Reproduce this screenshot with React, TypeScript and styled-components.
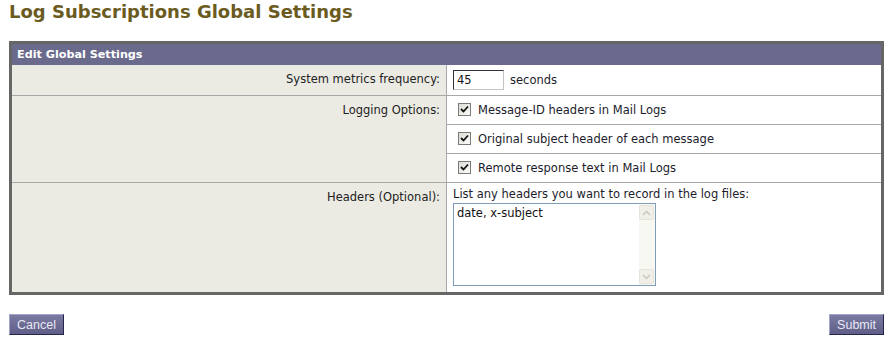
import React from "react";
import styled, { createGlobalStyle } from "styled-components";

const GlobalStyle = createGlobalStyle`
  body {
    margin: 0;
    background: #ffffff;
    font-family: Verdana, "DejaVu Sans", sans-serif;
  }
`;

const Page = styled.div`
  padding: 0 9px;
`;

const Title = styled.h1`
  margin: 0;
  height: 41px;
  padding-top: 1px;
  box-sizing: border-box;
  font-size: 18px;
  font-weight: bold;
  color: #6b5b1f;
`;

const Panel = styled.div`
  border: 3px solid #666666;
`;

const PanelHeader = styled.div`
  height: 21px;
  line-height: 21px;
  padding-left: 5px;
  background: #6a6a8c;
  color: #ffffff;
  font-size: 11.2px;
  font-weight: bold;
`;

const Row = styled.div<{ $first?: boolean }>`
  display: grid;
  grid-template-columns: 434px 1px 1fr;
  border-top: ${(p) => (p.$first ? "none" : "1px solid #a8a8a8")};
`;

const Label = styled.div`
  background: #ebebe3;
  text-align: right;
  padding: 7px 6px 0 0;
  font-size: 11.5px;
  color: #222222;
`;

const Divider = styled.div`
  background: #a8a8a8;
`;

const Value = styled.div<{ $pad?: string }>`
  padding: ${(p) => p.$pad ?? "0"};
  font-size: 11.5px;
  color: #1c1c2c;
`;

const InlineLine = styled.div`
  display: flex;
  align-items: center;
  gap: 6px;
  height: 30px;
  padding-left: 6px;
`;

const NumberInput = styled.input`
  width: 51px;
  height: 20px;
  box-sizing: border-box;
  border-width: 1px;
  border-style: solid;
  border-color: #333333 #c4c4c4 #c4c4c4 #333333;
  padding: 0 3px;
  font-family: Verdana, "DejaVu Sans", sans-serif;
  font-size: 11.5px;
  color: #111111;
  outline: none;
`;

const OptionRow = styled.label`
  display: flex;
  align-items: center;
  gap: 7px;
  height: 28px;
  padding-left: 11px;
  & + & {
    border-top: 1px solid #a8a8a8;
  }
`;

const CheckBox = styled.span`
  display: inline-flex;
  align-items: center;
  justify-content: center;
  width: 11px;
  height: 11px;
  border: 1px solid #7a7a7a;
  background: linear-gradient(135deg, #dcdcd4, #fbfbf8);
  margin-top: -2px;
`;

const Hint = styled.div`
  margin-bottom: 2px;
`;

const TextBox = styled.div`
  display: flex;
  width: 203px;
  height: 83px;
  box-sizing: border-box;
  border: 1px solid #7f9db9;
`;

const TextArea = styled.textarea`
  flex: 1;
  border: none;
  resize: none;
  padding: 2px 3px;
  font-family: Verdana, "DejaVu Sans", sans-serif;
  font-size: 11.5px;
  color: #111111;
  outline: none;
  overflow: hidden;
`;

const ScrollTrack = styled.div`
  display: flex;
  flex-direction: column;
  justify-content: space-between;
  width: 16px;
  background: #f8f8f2;
  padding: 1px 0;
`;

const ScrollButton = styled.div`
  width: 15px;
  height: 15px;
  box-sizing: border-box;
  border: 1px solid #e4e4dc;
  border-radius: 2px;
  background: #f0f0e8;
  display: flex;
  align-items: center;
  justify-content: center;
`;

const Footer = styled.div`
  display: flex;
  justify-content: space-between;
  margin-top: 19px;
`;

const Button = styled.button`
  height: 21px;
  padding: 0 7px;
  box-sizing: border-box;
  border-width: 1px;
  border-style: solid;
  border-color: #a4a4c8 #26264a #26264a #a4a4c8;
  background: linear-gradient(#7a7aa2, #5e5e88);
  color: #e8e8f4;
  font-family: "Liberation Sans", Arial, sans-serif;
  font-size: 12.5px;
  cursor: pointer;
`;

const Check = () => (
  <svg width="9" height="9" viewBox="0 0 9 9">
    <path d="M1 4 L3.5 6.5 L8 1.5" fill="none" stroke="#111" strokeWidth="1.8" />
  </svg>
);

const Chevron = ({ up }: { up?: boolean }) => (
  <svg width="9" height="6" viewBox="0 0 9 6">
    <path
      d={up ? "M1 5 L4.5 1.5 L8 5" : "M1 1 L4.5 4.5 L8 1"}
      fill="none"
      stroke="#c8c8c0"
      strokeWidth="1.5"
    />
  </svg>
);

const options = [
  "Message-ID headers in Mail Logs",
  "Original subject header of each message",
  "Remote response text in Mail Logs",
];

export default function App() {
  return (
    <Page>
      <GlobalStyle />
      <Title>Log Subscriptions Global Settings</Title>
      <Panel>
        <PanelHeader>Edit Global Settings</PanelHeader>
        <Row $first>
          <Label>System metrics frequency:</Label>
          <Divider />
          <Value>
            <InlineLine>
              <NumberInput defaultValue="45" />
              <span>seconds</span>
            </InlineLine>
          </Value>
        </Row>
        <Row>
          <Label>Logging Options:</Label>
          <Divider />
          <Value>
            {options.map((o) => (
              <OptionRow key={o}>
                <CheckBox>
                  <Check />
                </CheckBox>
                {o}
              </OptionRow>
            ))}
          </Value>
        </Row>
        <Row>
          <Label>Headers (Optional):</Label>
          <Divider />
          <Value $pad="4px 6px 6px">
            <Hint>List any headers you want to record in the log files:</Hint>
            <TextBox>
              <TextArea defaultValue="date, x-subject" />
              <ScrollTrack>
                <ScrollButton>
                  <Chevron up />
                </ScrollButton>
                <ScrollButton>
                  <Chevron />
                </ScrollButton>
              </ScrollTrack>
            </TextBox>
          </Value>
        </Row>
      </Panel>
      <Footer>
        <Button>Cancel</Button>
        <Button>Submit</Button>
      </Footer>
    </Page>
  );
}
